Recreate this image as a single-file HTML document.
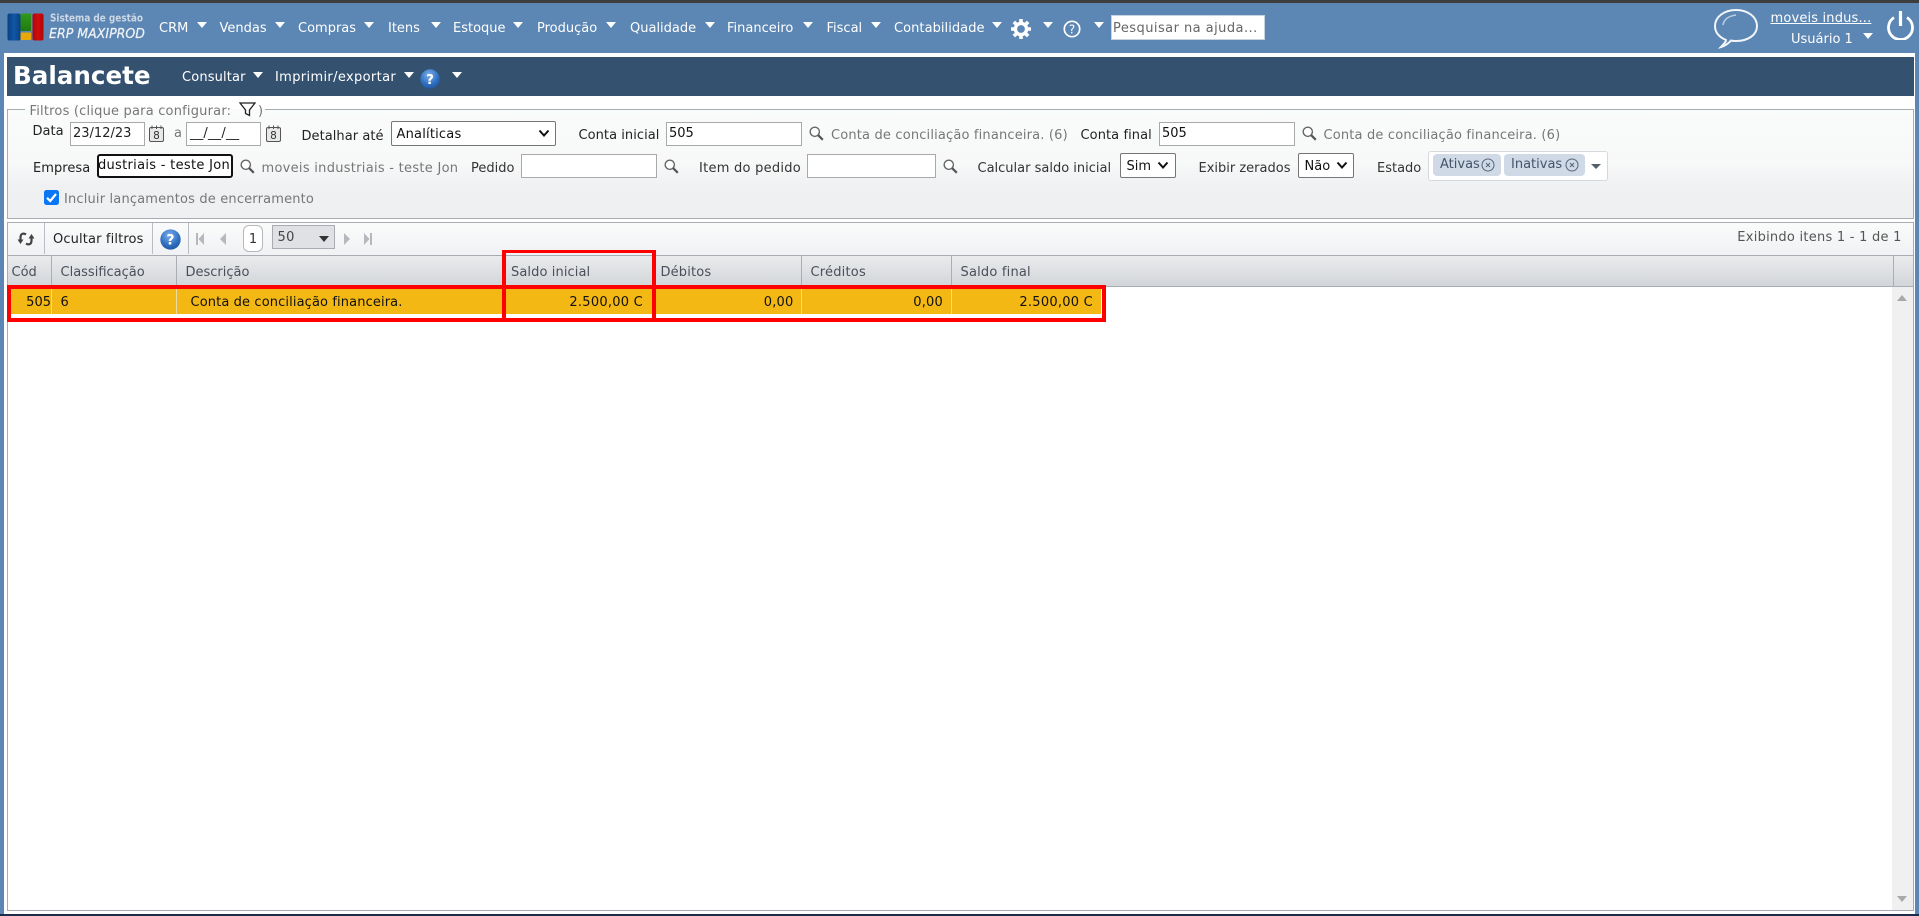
<!DOCTYPE html>
<html lang="pt-BR">
<head>
<meta charset="utf-8">
<title>Balancete</title>
<style>
html,body{margin:0;padding:0;width:1919px;height:916px;overflow:hidden;background:#fff}
body{position:relative;font-family:"DejaVu Sans","Liberation Sans",sans-serif;font-size:13px;color:#222}
div,span,i,svg{position:absolute;display:block}
.t{white-space:nowrap;line-height:16px;height:16px}
.n{color:#fff;top:21px}
.g{color:#777}
.l{color:#222}
.h{color:#4a4f5a;top:265px}
.r{color:#111;top:295px}
.ra{text-align:right;width:120px}
.a{width:0;height:0;border-left:5px solid transparent;border-right:5px solid transparent;border-top:6px solid #fff}
.in{background:#fff;border:1px solid #a9a9a9;box-sizing:border-box}
.sel{background:#fff;border:1px solid #767676;box-sizing:border-box;border-radius:2px}
.sep{background:#b9bdc3;width:1px}
.hs{background:#a9adb4;width:1px;top:256px;height:30px}
.rs{background:#ecdca0;width:1px;top:288px;height:26px}
.red{background:#fe0000}
</style>
</head>
<body>
<!-- frame -->
<div style="left:0;top:0;width:1919px;height:916px;background:#5c86b3"></div>
<div style="left:0;top:0;width:1919px;height:3px;background:#3d3d3d"></div>
<div style="left:0;top:914px;width:1919px;height:2px;background:#1e2c47"></div>
<div style="left:4px;top:53px;width:1911px;height:861px;background:#fff"></div>
<div style="left:7px;top:57px;width:1907px;height:39px;background:#34526f"></div>

<!-- logo -->
<svg style="left:0;top:0" width="150" height="50">
  <defs>
    <linearGradient id="lb" x1="0" y1="0" x2="1" y2="0"><stop offset="0" stop-color="#0a3f80"/><stop offset=".5" stop-color="#1058a8"/><stop offset="1" stop-color="#0a3f80"/></linearGradient>
    <linearGradient id="lg" x1="0" y1="0" x2="0" y2="1"><stop offset="0" stop-color="#2f9a1c"/><stop offset="1" stop-color="#1f7a10"/></linearGradient>
    <linearGradient id="lr" x1="0" y1="0" x2="1" y2="0"><stop offset="0" stop-color="#a90a0a"/><stop offset=".5" stop-color="#d40b0b"/><stop offset="1" stop-color="#a90a0a"/></linearGradient>
  </defs>
  <rect x="7.5" y="13.5" width="13" height="27" rx="2" fill="url(#lb)"/>
  <rect x="20.5" y="13.5" width="10.5" height="17.5" rx="1" fill="url(#lg)"/>
  <rect x="20.5" y="32.5" width="10.5" height="7.5" rx="1" fill="#e8a808"/>
  <rect x="32.5" y="13.5" width="11" height="27" rx="2" fill="url(#lr)"/>
  <text x="50" y="21.5" font-family="DejaVu Sans" font-size="10.5" font-weight="bold" fill="#ccd8e5" textLength="93" lengthAdjust="spacingAndGlyphs">Sistema de gestão</text>
  <text x="49" y="38" font-family="DejaVu Sans" font-size="13.5" font-style="italic" fill="#edf2f7" stroke="#edf2f7" stroke-width=".25" textLength="96" lengthAdjust="spacingAndGlyphs">ERP MAXIPROD</text>
</svg>

<!-- nav -->
<span class="t n" style="left:159px">CRM</span><i class="a" style="left:197px;top:22px"></i>
<span class="t n" style="left:219.5px">Vendas</span><i class="a" style="left:275px;top:22px"></i>
<span class="t n" style="left:298px">Compras</span><i class="a" style="left:364px;top:22px"></i>
<span class="t n" style="left:388px">Itens</span><i class="a" style="left:431px;top:22px"></i>
<span class="t n" style="left:453px">Estoque</span><i class="a" style="left:513px;top:22px"></i>
<span class="t n" style="left:537px">Produção</span><i class="a" style="left:606px;top:22px"></i>
<span class="t n" style="left:630px">Qualidade</span><i class="a" style="left:705px;top:22px"></i>
<span class="t n" style="left:727px">Financeiro</span><i class="a" style="left:803px;top:22px"></i>
<span class="t n" style="left:826.5px">Fiscal</span><i class="a" style="left:871px;top:22px"></i>
<span class="t n" style="left:894px;letter-spacing:.05px">Contabilidade</span><i class="a" style="left:992px;top:22px"></i>
<svg style="left:1011px;top:19px" width="20" height="20" viewBox="0 0 20 20">
  <circle cx="10" cy="10" r="5.6" fill="none" stroke="#fff" stroke-width="3.4"/>
  <g stroke="#fff" stroke-width="3.6">
    <path d="M10 0V4M10 16V20M0 10H4M16 10H20M2.9 2.9L5.7 5.7M14.3 14.3L17.1 17.1M17.1 2.9L14.3 5.7M5.7 14.3L2.9 17.1"/>
  </g>
</svg>
<i class="a" style="left:1043px;top:22px"></i>
<svg style="left:1063px;top:20px" width="18" height="18" viewBox="0 0 18 18">
  <circle cx="9" cy="9" r="7.7" fill="none" stroke="#fff" stroke-width="1.7"/>
  <text x="9" y="13.3" text-anchor="middle" font-family="DejaVu Sans" font-size="12" fill="#fff">?</text>
</svg>
<i class="a" style="left:1094px;top:22px"></i>
<div style="left:1111px;top:15px;width:154px;height:25px;background:#fff;border:1px solid #c9d3df;box-sizing:border-box"></div>
<span class="t" style="left:1113px;top:21px;color:#666;letter-spacing:.45px">Pesquisar na ajuda...</span>

<!-- right header -->
<svg style="left:1713px;top:8px" width="46" height="41" viewBox="0 0 46 41">
  <path d="M13 32C6 29 2 24 2 18C2 9 11 2 23 2C35 2 44 9 44 18C44 27 35 33 23 33C21 33 19.500 33 18 32.500C16 35 12 38 8 39C11 36 13 34 13 32Z" fill="none" stroke="#f2f6fa" stroke-width="2"/>
  <path d="M10 17C11 11 16 8 23 7" fill="none" stroke="#b9cde0" stroke-width="1.600"/>
</svg>
<span class="t" style="left:1770.5px;top:11px;color:#fff;text-decoration:underline;letter-spacing:.17px">moveis indus...</span>
<span class="t" style="left:1791px;top:32px;color:#fff">Usuário 1</span>
<i class="a" style="left:1863px;top:33px"></i>
<svg style="left:1886px;top:10px" width="29" height="30" viewBox="0 0 29 30">
  <path d="M8 7.500A12 12 0 1 0 21 7.500" fill="none" stroke="#fff" stroke-width="2.800"/>
  <path d="M14.500 1V16" fill="none" stroke="#fff" stroke-width="3.200"/>
</svg>

<!-- title bar -->
<span class="t" style="left:13px;top:62px;height:28px;line-height:28px;color:#fff;font-size:24.6px;font-weight:bold">Balancete</span>
<span class="t" style="left:182px;top:70px;color:#fff;letter-spacing:.15px">Consultar</span><i class="a" style="left:253px;top:72px"></i>
<span class="t" style="left:275px;top:70px;color:#fff;letter-spacing:.35px">Imprimir/exportar</span><i class="a" style="left:404px;top:72px"></i>
<svg style="left:420px;top:69px" width="20" height="20" viewBox="0 0 20 20">
  <defs><radialGradient id="hb" cx=".45" cy=".3" r=".8"><stop offset="0" stop-color="#7fb0ea"/><stop offset=".6" stop-color="#2f6fc0"/><stop offset="1" stop-color="#1a4f98"/></radialGradient></defs>
  <circle cx="10" cy="10" r="9.700" fill="url(#hb)"/>
  <text x="10" y="15" text-anchor="middle" font-family="DejaVu Sans" font-weight="bold" font-size="13.500" fill="#fff">?</text>
</svg>
<i class="a" style="left:452px;top:72px"></i>

<!-- filters fieldset -->
<div style="left:7px;top:109px;width:1907px;height:110px;box-sizing:border-box;border:1px solid #a8acb2;background:linear-gradient(#fafbfb 0%,#f7f8f8 50%,#eff0f2 72%,#eff0f2 100%)"></div>
<div style="left:25px;top:105px;width:240px;height:8px;background:linear-gradient(#fff 0,#fff 4px,#fafbfb 4px)"></div>
<span class="t g" style="left:29.500px;top:104px;letter-spacing:.2px">Filtros (clique para configurar:</span>
<svg style="left:239px;top:102px" width="17" height="15" viewBox="0 0 17 15"><path d="M1 1H16L10.500 8V13.500L6.500 11.500V8Z" fill="none" stroke="#222" stroke-width="1.300"/></svg>
<span class="t g" style="left:258px;top:104px">)</span>

<!-- row 1 -->
<span class="t l" style="left:32.500px;top:124px">Data</span>
<div class="in" style="left:70px;top:122px;width:75px;height:24px"></div>
<span class="t l" style="left:73px;top:126px">23/12/23</span>
<svg style="left:148px;top:125px" width="17" height="17" viewBox="0 0 17 17"><rect x="1.500" y="2.500" width="14" height="14" rx="1.500" fill="#e8e8e8" stroke="#555"/><path d="M4 0.500V4M8.500 .5V4M13 .5V4" stroke="#555"/><text x="8.500" y="14" text-anchor="middle" font-family="DejaVu Sans" font-size="10.500" fill="#333">8</text></svg>
<span class="t g" style="left:174px;top:126px">a</span>
<div class="in" style="left:186px;top:122px;width:75px;height:24px"></div>
<span class="t l" style="left:190px;top:126px;letter-spacing:.2px">__/__/__</span>
<svg style="left:265px;top:125px" width="17" height="17" viewBox="0 0 17 17"><rect x="1.500" y="2.500" width="14" height="14" rx="1.500" fill="#e8e8e8" stroke="#555"/><path d="M4 0.500V4M8.500 .5V4M13 .5V4" stroke="#555"/><text x="8.500" y="14" text-anchor="middle" font-family="DejaVu Sans" font-size="10.500" fill="#333">8</text></svg>
<span class="t l" style="left:301.500px;top:129px;letter-spacing:.05px">Detalhar até</span>
<div class="sel" style="left:391px;top:121px;width:165px;height:25px"></div>
<span class="t" style="left:396.500px;top:127px;color:#111;letter-spacing:.2px">Analíticas</span>
<svg style="left:538px;top:129px" width="12" height="9" viewBox="0 0 12 9"><path d="M1.500 1.500L6 6.500L10.500 1.500" fill="none" stroke="#111" stroke-width="2"/></svg>
<span class="t l" style="left:578.500px;top:128px;letter-spacing:.05px">Conta inicial</span>
<div class="in" style="left:666px;top:122px;width:136px;height:24px"></div>
<span class="t" style="left:669px;top:126px;color:#111">505</span>
<svg style="left:809px;top:126px" width="15" height="15" viewBox="0 0 15 15"><circle cx="5.800" cy="5.800" r="4.600" fill="#fff" stroke="#666" stroke-width="1.400"/><path d="M9.200 9.200L13.800 13.800" stroke="#555" stroke-width="2.200"/></svg>
<span class="t g" style="left:831px;top:128px;letter-spacing:.17px">Conta de conciliação financeira. (6)</span>
<span class="t l" style="left:1080.500px;top:128px;letter-spacing:.08px">Conta final</span>
<div class="in" style="left:1159px;top:122px;width:136px;height:24px"></div>
<span class="t" style="left:1162px;top:126px;color:#111">505</span>
<svg style="left:1302px;top:126px" width="15" height="15" viewBox="0 0 15 15"><circle cx="5.800" cy="5.800" r="4.600" fill="#fff" stroke="#666" stroke-width="1.400"/><path d="M9.200 9.200L13.800 13.800" stroke="#555" stroke-width="2.200"/></svg>
<span class="t g" style="left:1323.500px;top:128px;letter-spacing:.17px">Conta de conciliação financeira. (6)</span>

<!-- row 2 -->
<span class="t l" style="left:33px;top:161px;letter-spacing:.05px">Empresa</span>
<div style="left:97px;top:154px;width:136px;height:24px;box-sizing:border-box;background:#fff;border:2px solid #111;border-radius:3px;overflow:hidden"></div>
<div style="left:99px;top:156px;width:131px;height:20px;overflow:hidden"><span class="t" style="right:0;top:2px;color:#111;letter-spacing:.3px">dustriais - teste Jon</span></div>
<svg style="left:240px;top:159px" width="15" height="15" viewBox="0 0 15 15"><circle cx="5.800" cy="5.800" r="4.600" fill="#fff" stroke="#666" stroke-width="1.400"/><path d="M9.200 9.200L13.800 13.800" stroke="#555" stroke-width="2.200"/></svg>
<span class="t g" style="left:261.500px;top:161px;letter-spacing:.28px">moveis industriais - teste Jon</span>
<span class="t" style="left:471px;top:161px;color:#333">Pedido</span>
<div class="in" style="left:521px;top:154px;width:136px;height:24px"></div>
<svg style="left:664px;top:159px" width="15" height="15" viewBox="0 0 15 15"><circle cx="5.800" cy="5.800" r="4.600" fill="#fff" stroke="#666" stroke-width="1.400"/><path d="M9.200 9.200L13.800 13.800" stroke="#555" stroke-width="2.200"/></svg>
<span class="t" style="left:699px;top:161px;color:#333;letter-spacing:.26px">Item do pedido</span>
<div class="in" style="left:807px;top:154px;width:129px;height:24px"></div>
<svg style="left:943px;top:159px" width="15" height="15" viewBox="0 0 15 15"><circle cx="5.800" cy="5.800" r="4.600" fill="#fff" stroke="#666" stroke-width="1.400"/><path d="M9.200 9.200L13.800 13.800" stroke="#555" stroke-width="2.200"/></svg>
<span class="t" style="left:977.500px;top:161px;color:#333">Calcular saldo inicial</span>
<div class="sel" style="left:1120px;top:153px;width:56px;height:25px"></div>
<span class="t" style="left:1126.500px;top:159px;color:#111">Sim</span>
<svg style="left:1157px;top:161px" width="12" height="9" viewBox="0 0 12 9"><path d="M1.500 1.500L6 6.500L10.500 1.500" fill="none" stroke="#111" stroke-width="2"/></svg>
<span class="t" style="left:1198.500px;top:161px;color:#333">Exibir zerados</span>
<div class="sel" style="left:1298px;top:153px;width:56px;height:25px"></div>
<span class="t" style="left:1304.500px;top:159px;color:#111">Não</span>
<svg style="left:1336px;top:161px" width="12" height="9" viewBox="0 0 12 9"><path d="M1.500 1.500L6 6.500L10.500 1.500" fill="none" stroke="#111" stroke-width="2"/></svg>
<span class="t" style="left:1377px;top:161px;color:#333">Estado</span>
<div style="left:1428px;top:151px;width:180px;height:30px;box-sizing:border-box;background:#fff;border:1px solid #d5d8dc;border-radius:3px"></div>
<div style="left:1433px;top:154px;width:68px;height:22px;background:#cfdae6;border-radius:4px"></div>
<span class="t" style="left:1440px;top:157px;color:#44546a">Ativas</span>
<svg style="left:1481px;top:158px" width="14" height="14" viewBox="0 0 14 14"><circle cx="7" cy="7" r="6" fill="none" stroke="#55657a"/><path d="M5 5L9 9M9 5L5 9" stroke="#55657a"/></svg>
<div style="left:1504px;top:154px;width:81px;height:22px;background:#cfdae6;border-radius:4px"></div>
<span class="t" style="left:1511px;top:157px;color:#44546a">Inativas</span>
<svg style="left:1565px;top:158px" width="14" height="14" viewBox="0 0 14 14"><circle cx="7" cy="7" r="6" fill="none" stroke="#55657a"/><path d="M5 5L9 9M9 5L5 9" stroke="#55657a"/></svg>
<i class="a" style="left:1591px;top:164px;border-top-color:#55606e;border-top-width:5px"></i>

<!-- checkbox -->
<svg style="left:44px;top:190px" width="15" height="15" viewBox="0 0 15 15"><rect width="15" height="15" rx="2.500" fill="#0a76f6"/><path d="M3 7.800L6.200 11L12 4" fill="none" stroke="#fff" stroke-width="2.200"/></svg>
<span class="t g" style="left:64px;top:192px;letter-spacing:.17px">Incluir lançamentos de encerramento</span>

<!-- grid frame -->
<div style="left:7px;top:222px;width:1907px;height:689px;box-sizing:border-box;border:1px solid #a8acb2;background:#fff"></div>
<div style="left:8px;top:223px;width:1905px;height:33px;background:linear-gradient(#fafbfb,#f0f1f3)"></div>
<svg style="left:17px;top:231px" width="18" height="16" viewBox="0 0 18 16">
  <path d="M9 3.500C6 1.500 3.500 3 3.500 6.500V10" fill="none" stroke="#444" stroke-width="2.200"/>
  <path d="M0.500 8.500H6.500L3.500 13Z" fill="#444"/>
  <path d="M9 12.500C12 14.500 14.500 13 14.500 9.500V6" fill="none" stroke="#444" stroke-width="2.200"/>
  <path d="M11.500 7.500H17.500L14.500 3Z" fill="#444"/>
</svg>
<div class="sep" style="left:44px;top:223px;height:31px"></div>
<span class="t" style="left:53px;top:232px;color:#222;letter-spacing:.14px">Ocultar filtros</span>
<div class="sep" style="left:152px;top:223px;height:31px"></div>
<svg style="left:160px;top:229px" width="21" height="21" viewBox="0 0 20 20">
  <circle cx="10" cy="10" r="9.700" fill="url(#hb)"/>
  <text x="10" y="15" text-anchor="middle" font-family="DejaVu Sans" font-weight="bold" font-size="13.500" fill="#fff">?</text>
</svg>
<div class="sep" style="left:188px;top:223px;height:31px"></div>
<svg style="left:195px;top:233px" width="10" height="12" viewBox="0 0 10 12"><path d="M1 0H3V12H1ZM9 0V12L3.500 6Z" fill="#b5b8bc"/></svg>
<svg style="left:219px;top:233px" width="8" height="12" viewBox="0 0 8 12"><path d="M7 0V12L1 6Z" fill="#b5b8bc"/></svg>
<div style="left:243px;top:225px;width:20px;height:27px;box-sizing:border-box;background:#fff;border:1px solid #b5b8bc;border-radius:6px"></div>
<span class="t" style="left:243px;top:232px;width:20px;text-align:center;color:#333">1</span>
<div style="left:272px;top:225px;width:63px;height:24px;box-sizing:border-box;background:#dfe1e4;border:1px solid #a8acb2"></div>
<span class="t" style="left:277.500px;top:230px;color:#444;letter-spacing:.3px">50</span>
<i class="a" style="left:319px;top:236px;border-top-color:#333"></i>
<svg style="left:343px;top:233px" width="8" height="12" viewBox="0 0 8 12"><path d="M1 0V12L7 6Z" fill="#b5b8bc"/></svg>
<svg style="left:363px;top:233px" width="10" height="12" viewBox="0 0 10 12"><path d="M1 0V12L6.500 6ZM7 0H9V12H7Z" fill="#b5b8bc"/></svg>
<span class="t" style="left:1737.300px;top:230px;color:#555;letter-spacing:.25px">Exibindo itens 1 - 1 de 1</span>

<!-- header -->
<div style="left:8px;top:255px;width:1905px;height:1px;background:#a8acb2"></div>
<div style="left:8px;top:256px;width:1905px;height:30px;background:linear-gradient(#eaebed,#d2d5d9)"></div>
<div style="left:8px;top:286px;width:1905px;height:1px;background:#a8acb2"></div>
<div class="hs" style="left:51px"></div><div class="hs" style="left:176px"></div><div class="hs" style="left:504px"></div><div class="hs" style="left:652px"></div><div class="hs" style="left:801px"></div><div class="hs" style="left:951px"></div><div class="hs" style="left:1893px"></div>
<span class="t h" style="left:11.500px">Cód</span>
<span class="t h" style="left:60.500px">Classificação</span>
<span class="t h" style="left:185.500px">Descrição</span>
<span class="t h" style="left:511px;letter-spacing:.1px">Saldo inicial</span>
<span class="t h" style="left:660.500px;letter-spacing:.15px">Débitos</span>
<span class="t h" style="left:810.500px;letter-spacing:.2px">Créditos</span>
<span class="t h" style="left:960.500px;letter-spacing:.2px">Saldo final</span>

<!-- row -->
<div style="left:8px;top:287px;width:1093px;height:27px;background:#f4b815"></div>
<div class="rs" style="left:51px"></div><div class="rs" style="left:176px"></div><div class="rs" style="left:504px"></div><div class="rs" style="left:652px"></div><div class="rs" style="left:801px"></div><div class="rs" style="left:951px"></div>
<span class="t r ra" style="left:-69px">505</span>
<span class="t r" style="left:60.500px">6</span>
<span class="t r" style="left:190.500px;letter-spacing:.12px">Conta de conciliação financeira.</span>
<span class="t r ra" style="left:523px;letter-spacing:.25px">2.500,00 C</span>
<span class="t r ra" style="left:673.500px;letter-spacing:.2px">0,00</span>
<span class="t r ra" style="left:823px;letter-spacing:.2px">0,00</span>
<span class="t r ra" style="left:973px;letter-spacing:.25px">2.500,00 C</span>

<!-- scrollbar -->
<div style="left:1892px;top:287px;width:21px;height:623px;background:#f0f0f0"></div>
<i class="a" style="left:1897px;top:295px;border-top:0;border-bottom:6px solid #a9a9a9"></i>
<i class="a" style="left:1897px;top:896px;border-top-color:#a9a9a9"></i>

<!-- red highlights -->
<div class="red" style="left:7px;top:285px;width:1099px;height:3.500px"></div>
<div class="red" style="left:7px;top:318px;width:1099px;height:3.500px"></div>
<div class="red" style="left:7px;top:285px;width:3.500px;height:36.500px"></div>
<div class="red" style="left:1102px;top:285px;width:3.500px;height:36.500px"></div>
<div class="red" style="left:502px;top:249.500px;width:154px;height:3.500px"></div>
<div class="red" style="left:502px;top:249.500px;width:4px;height:72px"></div>
<div class="red" style="left:652px;top:249.500px;width:4px;height:72px"></div>
</body>
</html>
